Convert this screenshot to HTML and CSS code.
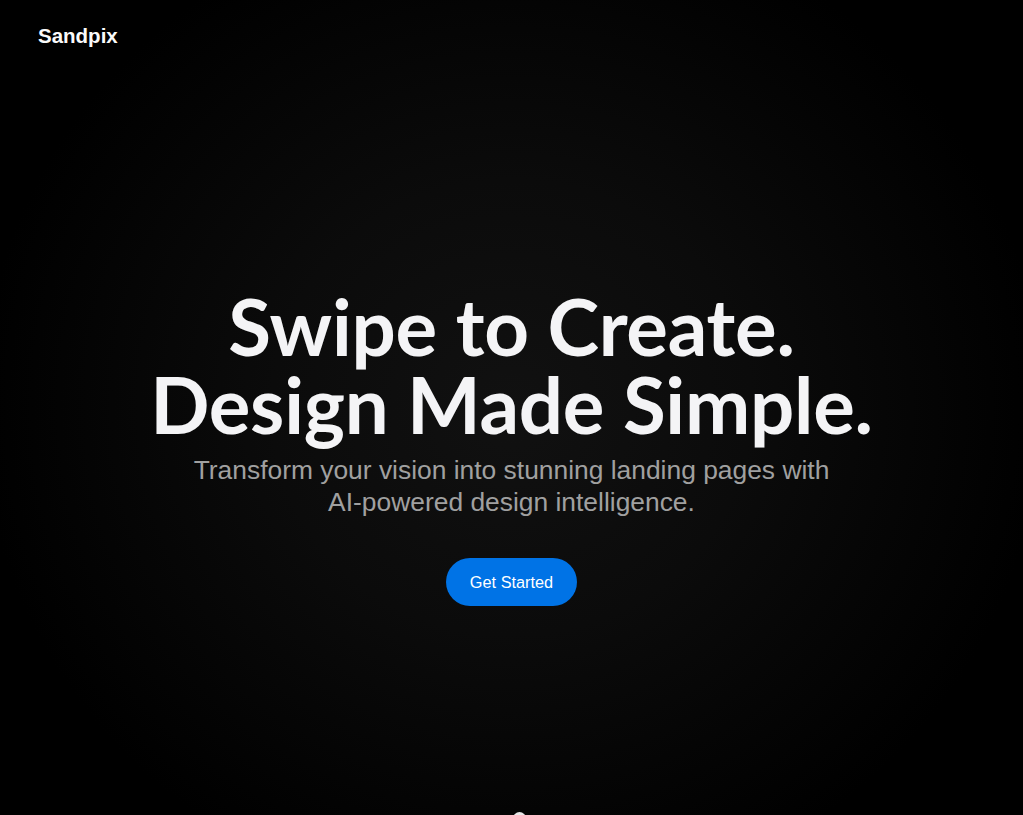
FILE: index.html
```html
<!DOCTYPE html>
<html lang="en">
<head>
<meta charset="utf-8">
<title>Sandpix</title>
<link rel="stylesheet" href="styles.css">
</head>
<body>
<div class="page">
  <header class="header">
    <div class="logo">Sandpix</div>
  </header>
  <main class="hero">
    <h1 class="title"><span class="title-line">Swipe to Create.</span><span class="title-line">Design Made Simple.</span></h1>
    <p class="subtitle">Transform your vision into stunning landing pages with<br>AI-powered design intelligence.</p>
    <a class="cta" href="#">Get Started</a>
  </main>
  <div class="scroll-hint"></div>
</div>
</body>
</html>
```

FILE: styles.css
```css
* { box-sizing: border-box; }
html, body { margin: 0; padding: 0; background: #000; }
.page {
  position: relative;
  width: 100%;
  height: 815px;
  overflow: hidden;
  background: radial-gradient(ellipse 52% 62% at 50% 50%, #111111 0%, #0b0b0b 45%, #050505 75%, #000 100%);
  font-family: "Liberation Sans", Arial, sans-serif;
  color: #f4f4f6;
  display: flex;
  flex-direction: column;
}
.header {
  padding: 24px 38px 0;
  height: 60px;
}
.logo {
  font-weight: 700;
  font-size: 20.5px;
  color: #fafafa;
}
.hero {
  display: flex;
  flex-direction: column;
  align-items: center;
  text-align: center;
  padding-top: 227px;
}
.title {
  margin: 0;
  font-family: "Lato", sans-serif;
  font-weight: 700;
  font-size: 78px;
  line-height: 78px;
  color: #f4f4f6;
  letter-spacing: -0.25px;
  display: flex;
  flex-direction: column;
  align-items: center;
}
.title-line {
  display: block;
  white-space: nowrap;
}
.subtitle {
  margin: 11px 0 0;
  font-size: 26.4px;
  line-height: 32px;
  color: #a0a0a0;
}
.cta {
  margin-top: 40px;
  display: inline-flex;
  align-items: center;
  justify-content: center;
  width: 131px;
  height: 48px;
  border-radius: 24px;
  background: #0073e6;
  color: #fff;
  font-size: 16.3px;
  text-decoration: none;
}
.scroll-hint {
  position: absolute;
  left: 513px;
  top: 812px;
  width: 13px;
  height: 20px;
  border-radius: 7px 7px 0 0;
  background: #e8e8e8;
}
```
